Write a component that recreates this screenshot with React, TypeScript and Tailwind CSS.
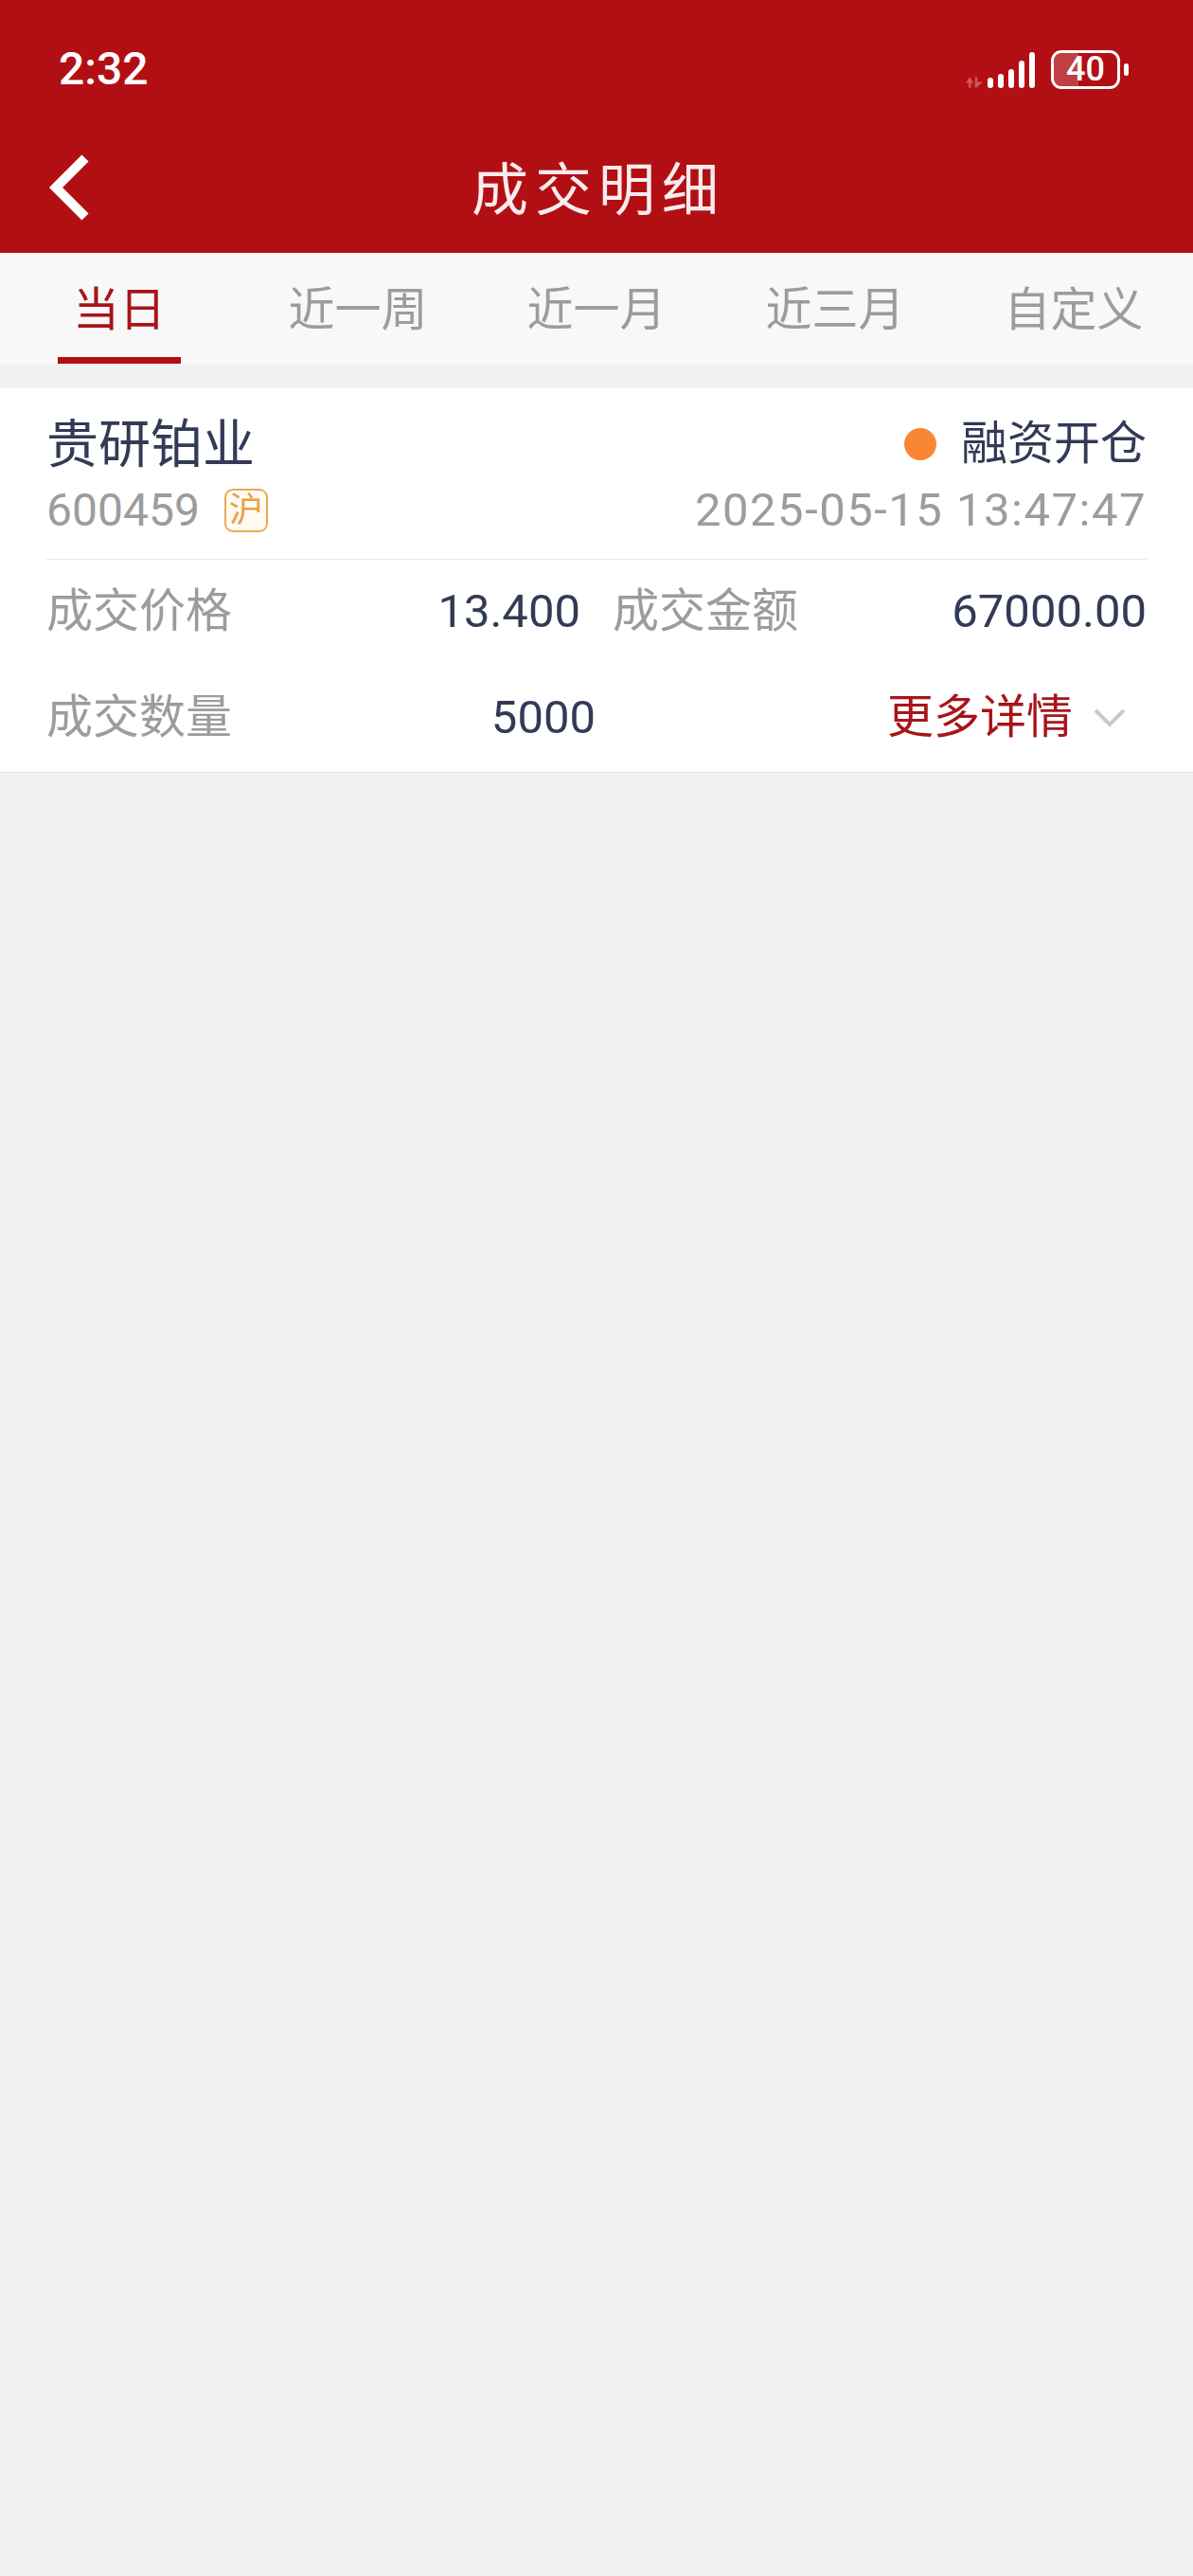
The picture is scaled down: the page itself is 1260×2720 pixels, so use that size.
import React from 'react';

const tabs = ['当日', '近一周', '近一月', '近三月', '自定义'];

const signalBars = ['h-[11px]', 'h-[15px]', 'h-[20px]', 'h-[29px]', 'h-[38px]'];

// --- STATUS BAR ---
const StatusBar: React.FC = () => (
  <div className="h-[125px] flex justify-between items-start pl-[62px] pr-[68px] pt-[53px] text-white">
    <div className="text-[48px] leading-[40px] font-medium">2:32</div>
    <div className="flex items-center">
      <div className="flex items-end gap-[5px] h-[38px]">
        <svg width="18" height="12" viewBox="0 0 17 11" className="text-white/30">
          <path d="M4 0 L8 6 L5.2 6 L5.2 11 L2.8 11 L2.8 6 L0 6 Z M9.2 0 L11.6 0 L11.6 5 L17 5 L10.4 11 L9.2 11 Z" fill="currentColor" />
        </svg>
        {signalBars.map((h) => (
          <div key={h} className={`w-[6px] rounded-full bg-white ${h}`} />
        ))}
      </div>
      <div className="relative ml-[17px] w-[73px] h-[41px] rounded-[11px] border-[3px] border-white flex items-center justify-center">
        <div className="absolute inset-y-0 left-0 w-[26px] rounded-l-[8px] bg-white/20" />
        <span className="relative text-[36px] leading-[35px] font-medium">40</span>
      </div>
      <div className="ml-[4px] w-[5px] h-[13px] rounded-full bg-white" />
    </div>
  </div>
);

// --- NAV ---
const NavBar: React.FC = () => (
  <div className="relative h-[142px] flex items-center justify-center pt-[12px]">
    <svg width="48" height="76" viewBox="0 0 48 76" className="absolute left-[48px] top-[35px]">
      <path d="M42 7 L11 38 L42 69" fill="none" stroke="#fff" strokeWidth="10" />
    </svg>
    <h1 className="text-[60px] leading-[70px] font-normal tracking-[7px] pl-[4px] text-[#f9ecec]">成交明细</h1>
  </div>
);

const Label: React.FC<{ children: React.ReactNode }> = ({ children }) => (
  <span className="text-[49px] leading-[56px] text-[#9c9c9c]">{children}</span>
);

const Value: React.FC<{ children: React.ReactNode }> = ({ children }) => (
  <span className="text-[49px] leading-[56px] text-[#333a56]">{children}</span>
);

// --- TRADE CARD ---
const TradeCard: React.FC = () => (
  <div className="mt-[26px] bg-white border-b border-[#e6e6e6] px-[49px] pt-[26px] h-[406px]">
    <div className="flex justify-between items-center h-[64px] pt-[2px]">
      <span className="text-[55px] leading-[64px] text-[#333a56]">贵研铂业</span>
      <div className="flex items-center">
        <span className="w-[34px] h-[34px] rounded-full bg-[#f98632] mr-[26px]" />
        <Value>融资开仓</Value>
      </div>
    </div>
    <div className="flex justify-between items-center h-[56px] mt-[11px]">
      <div className="flex items-center">
        <span className="text-[48px] leading-[56px] text-[#9c9c9c]">600459</span>
        <span className="ml-[26px] w-[46px] h-[46px] rounded-[9px] border-2 border-[#e9ab55] bg-[#fffaf2] flex items-center justify-center text-[36px] leading-[40px] text-[#e8a244]">沪</span>
      </div>
      <span className="text-[49px] leading-[56px] text-[#9c9c9c] tracking-[1.5px]">2025-05-15 13:47:47</span>
    </div>
    <div className="h-px bg-[#e6e6e6] mt-[23px]" />
    <div className="flex items-center h-[56px] mt-[27px]">
      <div className="w-[564px] flex justify-between"><Label>成交价格</Label><Value>13.400</Value></div>
      <div className="ml-[34px] flex-1 flex justify-between"><Label>成交金额</Label><Value>67000.00</Value></div>
    </div>
    <div className="flex items-center justify-between h-[56px] mt-[56px]">
      <div className="w-[580px] flex justify-between"><Label>成交数量</Label><Value>5000</Value></div>
      <div className="flex items-center pr-[21px]">
        <span className="text-[49px] leading-[56px] text-[#a8141a]">更多详情</span>
        <svg width="36" height="22" viewBox="0 0 36 22" className="ml-[21px]">
          <path d="M3 3 L18 18 L33 3" fill="none" stroke="#c9cad0" strokeWidth="4" />
        </svg>
      </div>
    </div>
  </div>
);

export default function App() {
  return (
    <div
      className="w-[1260px] h-[2720px] bg-[#f1f1f1] overflow-hidden"
      style={{ fontFamily: 'Roboto, "Noto Sans CJK SC", sans-serif' }}
    >
      <div className="bg-[#b20f15]">
        <StatusBar />
        <NavBar />
      </div>
      <div className="h-[117px] bg-[#f8f8f8] grid grid-cols-5">
        {tabs.map((tab, i) => (
          <div key={tab} className="relative flex justify-center pt-[33px]">
            <span className={`text-[49px] leading-[56px] ${i === 0 ? 'text-[#a8141a]' : 'text-[#9c9c9c]'}`}>{tab}</span>
            {i === 0 && <div className="absolute bottom-0 left-[61px] w-[130px] h-[7px] bg-[#b20f15]" />}
          </div>
        ))}
      </div>
      <TradeCard />
    </div>
  );
}
